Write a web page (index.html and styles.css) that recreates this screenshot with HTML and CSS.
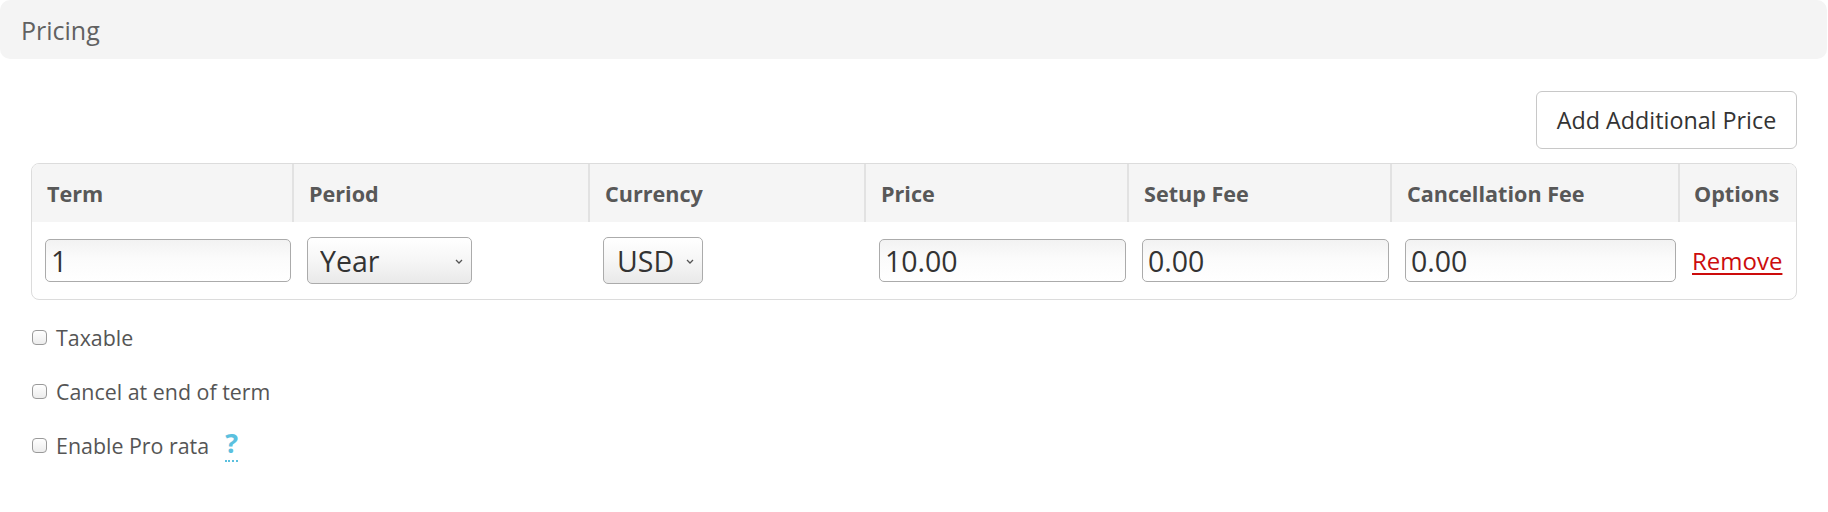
FILE: index.html
```html
<!DOCTYPE html>
<html lang="en">
<head>
<meta charset="utf-8">
<title>Pricing</title>
<link rel="stylesheet" href="styles.css">
</head>
<body>
<div class="panel">
  <div class="panel-heading">Pricing</div>
  <div class="panel-body">
    <div class="toolbar">
      <button class="btn" type="button">Add Additional Price</button>
    </div>
    <table class="price-table">
      <colgroup>
        <col class="c-term">
        <col class="c-period">
        <col class="c-currency">
        <col class="c-price">
        <col class="c-setup">
        <col class="c-cancel">
        <col class="c-options">
      </colgroup>
      <thead>
        <tr>
          <th>Term</th>
          <th>Period</th>
          <th>Currency</th>
          <th>Price</th>
          <th>Setup Fee</th>
          <th>Cancellation Fee</th>
          <th class="last">Options</th>
        </tr>
      </thead>
      <tbody>
        <tr>
          <td><input class="field" type="text" value="1"></td>
          <td>
            <span class="select select-period">
              <select class="select-input"><option>Year</option></select>
              <svg class="chev" width="8" height="5" viewBox="0 0 8 5"><path d="M1 1 L4 4 L7 1" fill="none" stroke="#555" stroke-width="1.3"/></svg>
            </span>
          </td>
          <td>
            <span class="select select-currency">
              <select class="select-input"><option>USD</option></select>
              <svg class="chev" width="8" height="5" viewBox="0 0 8 5"><path d="M1 1 L4 4 L7 1" fill="none" stroke="#555" stroke-width="1.3"/></svg>
            </span>
          </td>
          <td><input class="field" type="text" value="10.00"></td>
          <td><input class="field" type="text" value="0.00"></td>
          <td class="td-cancel"><input class="field" type="text" value="0.00"></td>
          <td class="td-options"><a class="remove" href="#">Remove</a></td>
        </tr>
      </tbody>
    </table>
    <div class="checks">
      <label class="check"><input class="cb" type="checkbox"><span>Taxable</span></label>
      <label class="check"><input class="cb" type="checkbox"><span>Cancel at end of term</span></label>
      <label class="check"><input class="cb" type="checkbox"><span>Enable Pro rata</span><span class="help">?</span></label>
    </div>
  </div>
</div>
</body>
</html>
```

FILE: styles.css
```css
html, body {
  margin: 0;
  padding: 0;
  background: #fff;
}
body {
  font-family: "Open Sans", "Noto Sans", sans-serif;
  color: #555;
  width: 1828px;
  height: 512px;
  overflow: hidden;
}
.panel-heading {
  height: 59px;
  display: flex;
  align-items: center;
  padding: 0 21px;
  background: #f4f4f4;
  border-radius: 10px;
  margin-right: 1px;
  font-size: 25px;
  color: #616161;
}
.panel-body {
  padding: 32px 31px 0 31px;
}
.toolbar {
  display: flex;
  justify-content: flex-end;
}
.btn {
  height: 58px;
  width: 261px;
  padding: 0;
  background: #fff;
  border: 1.5px solid #c8c8c8;
  border-radius: 6px;
  font-family: "Open Sans", "Noto Sans", sans-serif;
  font-size: 23.3px;
  color: #333;
}
.price-table {
  margin-top: 14px;
  width: 100%;
  table-layout: fixed;
  border-collapse: separate;
  border-spacing: 0;
  border: 1.5px solid #dcdcdc;
  border-radius: 8px;
  overflow: hidden;
}
.c-term { width: 262px; }
.c-period { width: 296px; }
.c-currency { width: 276px; }
.c-price { width: 263px; }
.c-setup { width: 263px; }
.c-cancel { width: 288px; }
.c-options { width: 116px; }
.price-table th {
  height: 58px;
  padding: 0 0 0 15px;
  background: #f5f5f5;
  text-align: left;
  font-size: 21.6px;
  font-weight: 700;
  color: #585858;
  border-right: 2px solid #e2e2e2;
  white-space: nowrap;
}
.price-table th.last {
  border-right: 0;
  padding-left: 14px;
}
.price-table td {
  height: 77px;
  padding: 0 3px 0 13px;
  vertical-align: middle;
}
.price-table td.td-cancel {
  padding-right: 4px;
}
.price-table td.td-options {
  padding: 0 0 0 12px;
}
.field {
  display: block;
  box-sizing: border-box;
  width: 100%;
  height: 43px;
  margin: 0;
  padding: 0 5px;
  border: 1.5px solid #ababab;
  border-radius: 5px;
  background: linear-gradient(to bottom, #f2f2f2 0%, #fbfbfb 45%, #fff 100%);
  font-family: "Open Sans", "Noto Sans", sans-serif;
  font-size: 28.5px;
  color: #333;
  outline: none;
}
.select {
  position: relative;
  display: inline-block;
  vertical-align: middle;
}
.select-input {
  display: block;
  box-sizing: border-box;
  height: 47px;
  margin: 0;
  -webkit-appearance: none;
  appearance: none;
  border: 1.5px solid #ababab;
  border-radius: 5px;
  background: linear-gradient(to bottom, #ffffff 0%, #f6f6f6 50%, #e9e9e9 100%);
  font-family: "Open Sans", "Noto Sans", sans-serif;
  font-size: 28.5px;
  color: #333;
  outline: none;
}
.select-period .select-input {
  width: 165px;
  padding: 0 0 0 12px;
}
.select-currency .select-input {
  width: 100px;
  padding: 0 0 0 13px;
}
.chev {
  position: absolute;
  top: 22px;
  right: 9px;
  pointer-events: none;
}
.remove {
  font-size: 24px;
  color: #cc0c0c;
  text-decoration: underline;
  text-underline-offset: 3px;
}
.checks {
  margin-top: 20px;
  display: flex;
  flex-direction: column;
  gap: 20px;
}
.check {
  display: flex;
  align-items: center;
  height: 34px;
  font-size: 21.4px;
  color: #555;
}
.cb {
  -webkit-appearance: none;
  appearance: none;
  box-sizing: border-box;
  width: 15px;
  height: 15px;
  margin: 0 9px 0 1px;
  border: 1.5px solid #9a9a9a;
  border-radius: 4px;
  background: linear-gradient(to bottom, #fff, #ececec);
}
.help {
  margin-left: 16px;
  font-size: 27px;
  font-weight: 700;
  line-height: 1.3;
  color: #5bc0de;
  border-bottom: 2px dotted #5bc0de;
  align-self: flex-start;
  margin-top: -3px;
}
```
